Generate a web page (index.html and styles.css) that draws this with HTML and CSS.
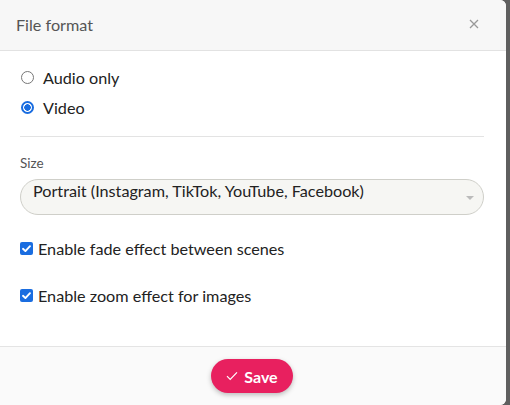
FILE: index.html
```html
<!DOCTYPE html>
<html>
<head>
<meta charset="utf-8">
<link rel="stylesheet" href="styles.css">
</head>
<body>
<div class="backdrop">
  <div class="modal">
    <div class="header">
      <div class="title">File format</div>
      <div class="close">
        <svg width="10" height="10" viewBox="0 0 10 10"><path d="M1 1L9 9M9 1L1 9" stroke="#999" stroke-width="1.3" fill="none"/></svg>
      </div>
    </div>
    <div class="body">
      <label class="radio-row"><span class="radio"></span><span>Audio only</span></label>
      <label class="radio-row"><span class="radio checked"></span><span>Video</span></label>
      <div class="divider"></div>
      <div class="field-label">Size</div>
      <div class="select">
        <span class="select-text">Portrait (Instagram, TikTok, YouTube, Facebook)</span>
        <span class="caret"></span>
      </div>
      <label class="check-row first"><span class="check"><svg width="13" height="13" viewBox="0 0 13 13"><path d="M3 6.8L5.4 9.1L10 4.2" stroke="#fff" stroke-width="1.9" fill="none" stroke-linecap="round" stroke-linejoin="round"/></svg></span><span>Enable fade effect between scenes</span></label>
      <label class="check-row"><span class="check"><svg width="13" height="13" viewBox="0 0 13 13"><path d="M3 6.8L5.4 9.1L10 4.2" stroke="#fff" stroke-width="1.9" fill="none" stroke-linecap="round" stroke-linejoin="round"/></svg></span><span>Enable zoom effect for images</span></label>
    </div>
    <div class="footer">
      <button class="save"><svg width="12" height="10" viewBox="0 0 12 10"><path d="M1 5.2L4.2 8.4L11 1.4" stroke="#fff" stroke-width="1.2" fill="none"/></svg><span>Save</span></button>
    </div>
  </div>
</div>
</body>
</html>
```
FILE: styles.css
```css
html, body {
  margin: 0;
  padding: 0;
  width: 510px;
  height: 405px;
  overflow: hidden;
}
body {
  font-family: "Lato", "Noto Sans", sans-serif;
  color: #222;
}
.backdrop {
  width: 510px;
  height: 405px;
  background: #5f5f5f;
  display: flex;
}
.modal {
  width: 506px;
  height: 405px;
  background: #fff;
  border-radius: 0 6px 6px 0;
  overflow: hidden;
  display: flex;
  flex-direction: column;
}
.header {
  height: 51px;
  background: #f7f7f7;
  border-bottom: 1px solid #e2e2e2;
  display: flex;
  align-items: center;
  justify-content: space-between;
  padding: 0 27px 0 16px;
  box-sizing: border-box;
  flex-shrink: 0;
}
.title {
  font-size: 16.2px;
  color: #555;
  margin-top: -2px;
}
.close {
  display: flex;
  margin-top: -2px;
}
.body {
  flex: 1;
  padding: 11px 22px 0 20px;
}
.radio-row {
  display: flex;
  align-items: center;
  height: 30px;
  font-size: 16.2px;
  gap: 9px;
}
.radio {
  width: 13px;
  height: 13px;
  border-radius: 50%;
  border: 1.5px solid #777;
  box-sizing: border-box;
  margin-left: 1px;
  flex-shrink: 0;
}
.radio.checked {
  border: 2px solid #1a6de0;
  background: radial-gradient(circle, #1a6de0 0 3px, #fff 3.5px);
}
.divider {
  height: 1px;
  background: #e3e3e3;
  margin-top: 14px;
}
.field-label {
  font-size: 13.5px;
  color: #555;
  margin-top: 18px;
  line-height: 16px;
}
.select {
  margin-top: 8px;
  height: 36px;
  border: 1px solid #cfcfc9;
  border-radius: 18px;
  background: #f6f6f3;
  box-sizing: border-box;
  display: flex;
  align-items: center;
  justify-content: space-between;
  padding: 0 9px 0 12px;
  font-size: 16.2px;
  color: #222;
}
.select-text {
  margin-top: -14px;
}
.caret {
  width: 0;
  height: 0;
  border-left: 4px solid transparent;
  border-right: 4px solid transparent;
  border-top: 4px solid #bbb;
  margin-top: 2px;
}
.check-row {
  display: flex;
  align-items: center;
  font-size: 16.2px;
  gap: 5px;
  height: 20px;
}
.check-row.first { margin-top: 23px; }
.check-row + .check-row { margin-top: 27px; }
.check {
  width: 13px;
  height: 13px;
  background: #1a6de0;
  border-radius: 2px;
  display: flex;
  flex-shrink: 0;
}
.footer {
  height: 58px;
  background: #fafafa;
  border-top: 1px solid #e4e4e4;
  display: flex;
  justify-content: center;
  align-items: flex-start;
  flex-shrink: 0;
}
.save {
  margin-top: 12px;
  height: 34px;
  width: 82px;
  border: none;
  border-radius: 17px;
  background: #e8205f;
  color: #fff;
  font-family: inherit;
  font-weight: 700;
  font-size: 16px;
  display: flex;
  align-items: center;
  justify-content: center;
  gap: 6px;
  box-shadow: 0 2px 5px rgba(0,0,0,0.25);
  padding: 0;
  margin-right: 2px;
}
```
